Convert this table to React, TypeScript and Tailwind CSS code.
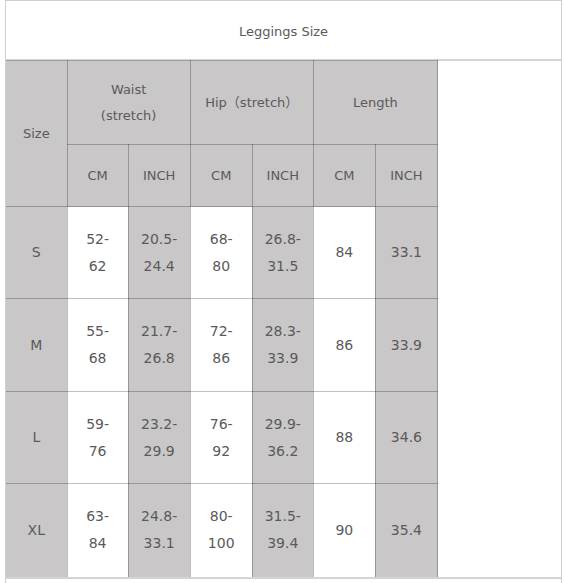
import React from "react";

const rows = [
  { s: "S", h: "h-[92px]", v: [["52-", "62"], ["20.5-", "24.4"], ["68-", "80"], ["26.8-", "31.5"], ["84"], ["33.1"]] },
  { s: "M", h: "h-[93px]", v: [["55-", "68"], ["21.7-", "26.8"], ["72-", "86"], ["28.3-", "33.9"], ["86"], ["33.9"]] },
  { s: "L", h: "h-[92px]", v: [["59-", "76"], ["23.2-", "29.9"], ["76-", "92"], ["29.9-", "36.2"], ["88"], ["34.6"]] },
  { s: "XL", h: "h-[93px]", v: [["63-", "84"], ["24.8-", "33.1"], ["80-", "100"], ["31.5-", "39.4"], ["90"], ["35.4"]] },
];

export default function App() {
  const font = { fontFamily: '"DejaVu Sans", "Noto Sans CJK SC", sans-serif' };
  return (
    <div className="w-[565px] h-[583px] overflow-hidden bg-white">
      <div
        className="ml-[5px] w-[557px] h-[600px] border-x border-t border-[#cfcfcf] text-[#5a5a5a]"
        style={font}
      >
        <div className="h-[60px] pt-[3px] flex items-center justify-center text-[13px] border-b-2 border-[#d4d4d4]">
          Leggings Size
        </div>
        <div className="border-b-2 border-[#d4d4d4] -mt-px">
          <table className="border-collapse table-fixed w-[432px] text-center">
            <colgroup>
              <col className="w-[61px]" />
              <col className="w-[61px]" />
              <col className="w-[62px]" />
              <col className="w-[62px]" />
              <col className="w-[61px]" />
              <col className="w-[62px]" />
              <col className="w-[62px]" />
            </colgroup>
            <tbody className="text-[13px]">
              <tr className="h-[84px]">
                <td rowSpan={2} className="bg-[#c9c7c8] border border-black/25 border-l-0 align-middle">
                  Size
                </td>
                <td colSpan={2} className="bg-[#c9c7c8] border border-black/25 leading-[26px]">
                  Waist
                  <br />
                  (stretch)
                </td>
                <td colSpan={2} className="bg-[#c9c7c8] border border-black/25">
                  Hip（stretch）
                </td>
                <td colSpan={2} className="bg-[#c9c7c8] border border-black/25">
                  Length
                </td>
              </tr>
              <tr className="h-[62px]">
                {["CM", "INCH", "CM", "INCH", "CM", "INCH"].map((t, i) => (
                  <td key={i} className="bg-[#c9c7c8] border border-black/25">
                    {t}
                  </td>
                ))}
              </tr>
              {rows.map((r, ri) => (
                <tr key={r.s} className={r.h + " text-[14px]"}>
                  <td
                    className={
                      "bg-[#c9c7c8] border border-black/25 border-l-0 " +
                      (ri === rows.length - 1 ? "border-b-0" : "")
                    }
                  >
                    {r.s}
                  </td>
                  {r.v.map((lines, i) => (
                    <td
                      key={i}
                      className={
                        (i % 2 === 0 ? "bg-white " : "bg-[#c9c7c8] ") +
                        "border border-black/25 leading-[27px] " +
                        (ri === rows.length - 1 ? "border-b-0" : "")
                      }
                    >
                      {lines.map((l, li) => (
                        <div key={li}>{l}</div>
                      ))}
                    </td>
                  ))}
                </tr>
              ))}
            </tbody>
          </table>
        </div>
      </div>
    </div>
  );
}
